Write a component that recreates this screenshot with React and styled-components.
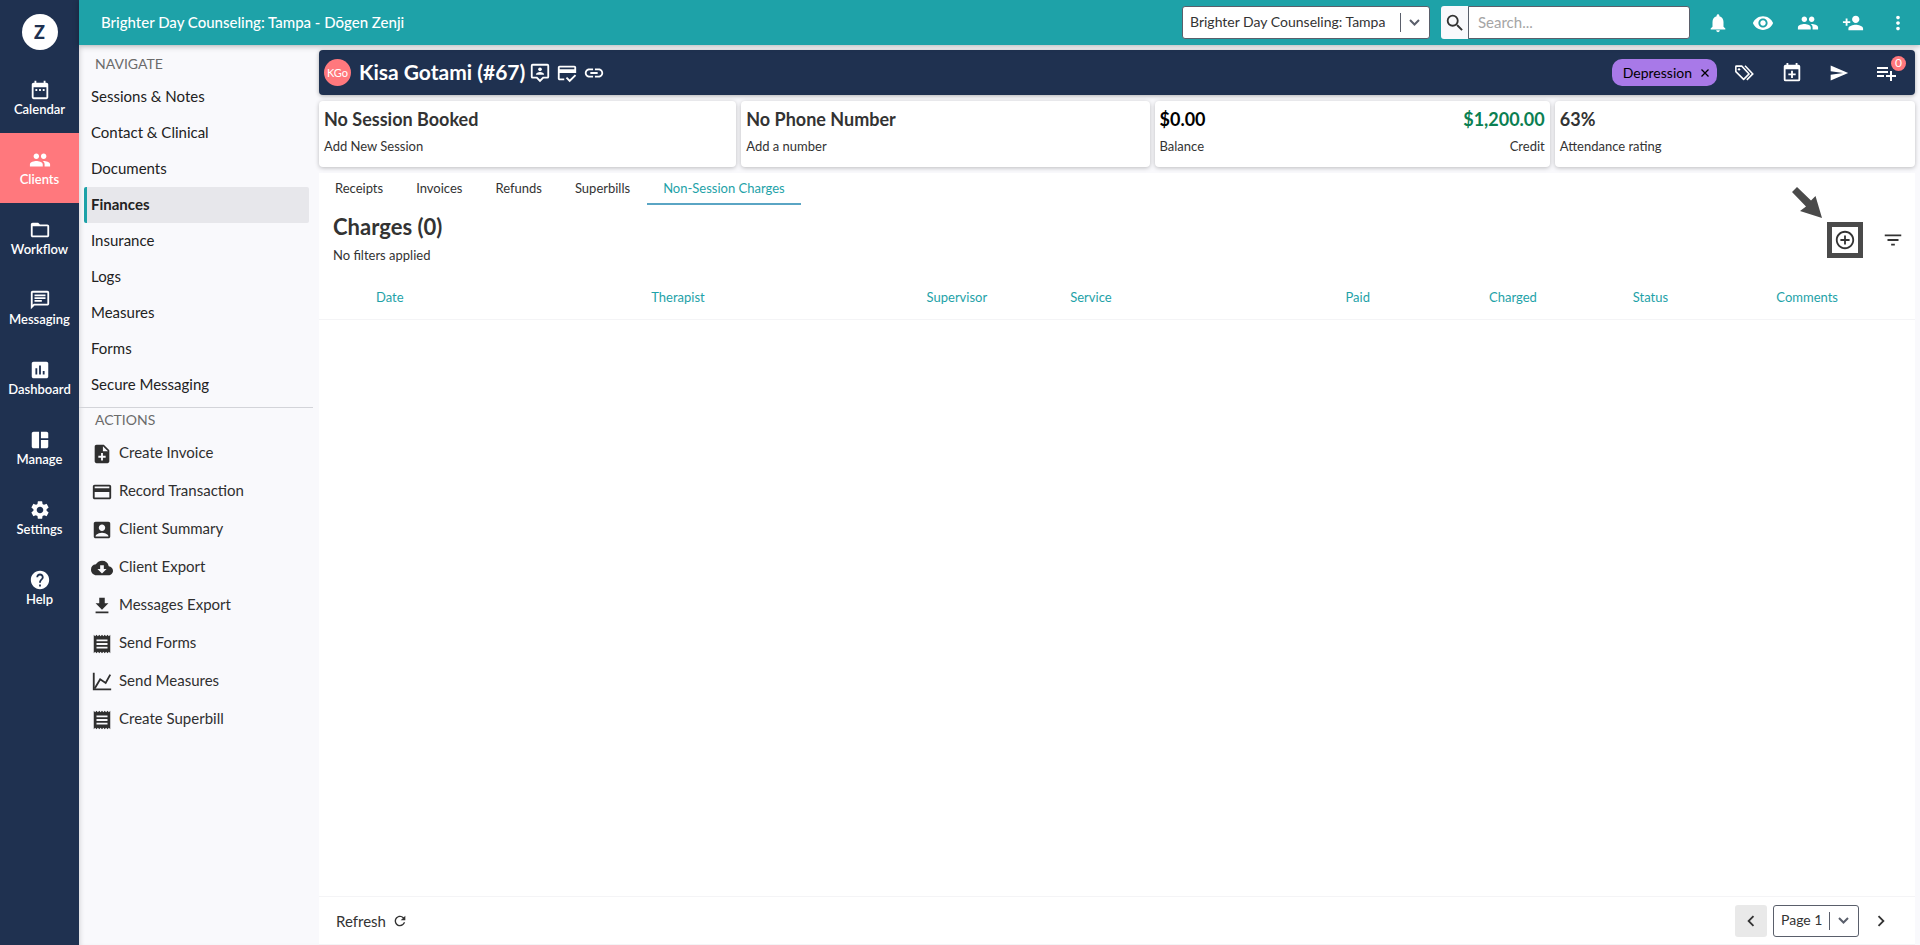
import React from 'react'
import styled, { createGlobalStyle } from 'styled-components'
import {
  MdAccountBox,
  MdAddCircleOutline,
  MdAssessment,
  MdChevronLeft,
  MdChevronRight,
  MdCloudDownload,
  MdCreditCard,
  MdCreditScore,
  MdDateRange,
  MdDownload,
  MdFilterList,
  MdFolderOpen,
  MdHelp,
  MdLink,
  MdMoreVert,
  MdNoteAdd,
  MdNotifications,
  MdOutlineChat,
  MdPeople,
  MdPersonAdd,
  MdPlaylistAdd,
  MdReceipt,
  MdRefresh,
  MdSearch,
  MdSend,
  MdSettings,
  MdSpaceDashboard,
  MdVisibility,
} from 'react-icons/md'

const ChartIcon = ({ size }) => (
  <svg width={size} height={size} viewBox='0 0 24 24' fill='none' stroke='currentColor' strokeWidth='2'>
    <path d='M3 2v18h19' />
    <path d='M4 19L10 9l6 4 5-9' />
  </svg>
)

const TagsIcon = ({ size }) => (
  <svg width={size} height={size} viewBox='0 0 24 24' fill='none' stroke='currentColor' strokeWidth='1.7'>
    <path d='M2 5v5.500l8.500 8.500 6-6L8.500 4.500H2.500A.5.5 0 0 0 2 5z' strokeLinejoin='round' />
    <path d='M12 4l8.500 9-6.500 6.500' />
    <circle cx='5.500' cy='8' r='1.300' fill='currentColor' stroke='none' />
  </svg>
)

const CalendarPlusIcon = ({ size }) => (
  <svg width={size} height={size} viewBox='0 0 24 24' fill='currentColor'>
    <path d='M19 19V8H5v11h14M16 1h2v2h1a2 2 0 0 1 2 2v14a2 2 0 0 1-2 2H5a2 2 0 0 1-2-2V5a2 2 0 0 1 2-2h1V1h2v2h8V1m-5 8.500h2v3h3v2h-3v3h-2v-3H8v-2h3v-3z' />
  </svg>
)

const ContactIcon = ({ size }) => (
  <svg width={size} height={size} viewBox='0 0 24 24' fill='currentColor'>
    <path d='M20 2H4a2 2 0 0 0-2 2v12a2 2 0 0 0 2 2h4l4 4 4-4h4a2 2 0 0 0 2-2V4a2 2 0 0 0-2-2zm0 14h-5l-3 3-3-3H4V4h16v12z' />
    <circle cx='12' cy='8' r='2' />
    <path d='M7.500 14c0-2 2.500-3 4.500-3s4.500 1 4.500 3z' />
  </svg>
)

const Caret = () => (
  <svg width='11' height='7' viewBox='0 0 11 7' fill='none' stroke='currentColor' strokeWidth='2'>
    <path d='M1 1l4.500 4.500L10 1' />
  </svg>
)

const menu = [
  { label: 'Calendar', Icon: MdDateRange },
  { label: 'Clients', Icon: MdPeople, active: true },
  { label: 'Workflow', Icon: MdFolderOpen },
  { label: 'Messaging', Icon: MdOutlineChat },
  { label: 'Dashboard', Icon: MdAssessment },
  { label: 'Manage', Icon: MdSpaceDashboard },
  { label: 'Settings', Icon: MdSettings },
  { label: 'Help', Icon: MdHelp },
]

const pages = [
  'Sessions & Notes',
  'Contact & Clinical',
  'Documents',
  'Finances',
  'Insurance',
  'Logs',
  'Measures',
  'Forms',
  'Secure Messaging',
]

const actions = [
  { label: 'Create Invoice', Icon: MdNoteAdd },
  { label: 'Record Transaction', Icon: MdCreditCard },
  { label: 'Client Summary', Icon: MdAccountBox },
  { label: 'Client Export', Icon: MdCloudDownload },
  { label: 'Messages Export', Icon: MdDownload },
  { label: 'Send Forms', Icon: MdReceipt },
  { label: 'Send Measures', Icon: ChartIcon },
  { label: 'Create Superbill', Icon: MdReceipt },
]

const tabs = ['Receipts', 'Invoices', 'Refunds', 'Superbills', 'Non-Session Charges']

const columns = ['Date', 'Therapist', 'Supervisor', 'Service', 'Paid', 'Charged', 'Status', 'Comments']

const topActions = [
  { label: 'Notifications', Icon: MdNotifications },
  { label: 'Recently viewed', Icon: MdVisibility },
  { label: 'Clients', Icon: MdPeople },
  { label: 'Add client', Icon: MdPersonAdd },
  { label: 'More', Icon: MdMoreVert },
]

export default function App() {
  return (
    <Page>
      <GlobalStyle />
      <Menu aria-label='Main'>
        <LogoLink href='#' aria-label='Home'>
          <Logo>Z</Logo>
        </LogoLink>
        {menu.map(({ label, Icon, active }) => (
          <MenuLink key={label} href='#' $active={active}>
            <Icon size={22} />
            {label}
          </MenuLink>
        ))}
      </Menu>
      <Content>
        <TopBar>
          <Practice>Brighter Day Counseling: Tampa - Dōgen Zenji</Practice>
          <SelectBox $wide>
            <Select aria-label='Location'>
              <option>Brighter Day Counseling: Tampa</option>
            </Select>
            <SelectArrow>
              <Caret />
            </SelectArrow>
          </SelectBox>
          <Search>
            <SearchButton aria-label='Search'>
              <MdSearch size={22} />
            </SearchButton>
            <SearchInput type='text' placeholder='Search...' aria-label='Search clients' />
          </Search>
          <TopActions>
            {topActions.map(({ label, Icon }) => (
              <IconButton key={label} aria-label={label} $width={45}>
                <Icon size={22} />
              </IconButton>
            ))}
          </TopActions>
        </TopBar>
        <Body>
          <SideNav>
            <NavTitle>NAVIGATE</NavTitle>
            <NavList>
              {pages.map((page) => (
                <li key={page}>
                  <NavLink href='#' $active={page === 'Finances'}>
                    {page}
                  </NavLink>
                </li>
              ))}
            </NavList>
            <Divider />
            <NavTitle $tight>ACTIONS</NavTitle>
            <NavList>
              {actions.map(({ label, Icon }) => (
                <li key={label}>
                  <ActionButton>
                    <Icon size={22} />
                    <span>{label}</span>
                  </ActionButton>
                </li>
              ))}
            </NavList>
          </SideNav>
          <Main>
            <ClientBar>
              <Avatar>KGo</Avatar>
              <ClientName>Kisa Gotami (#67)</ClientName>
              <TitleIcons>
                <ContactIcon size={22} />
                <MdCreditScore size={22} />
                <MdLink size={22} />
              </TitleIcons>
              <Chip>
                Depression
                <ChipClose aria-label='Remove Depression'>
                  <svg width='8' height='8' viewBox='0 0 8 8' stroke='currentColor' strokeWidth='1.300'>
                    <path d='M0.500 0.500l7 7M7.500 0.500l-7 7' />
                  </svg>
                </ChipClose>
              </Chip>
              <IconButton aria-label='Tags' $width={47}>
                <TagsIcon size={22} />
              </IconButton>
              <IconButton aria-label='Add session' $width={47}>
                <CalendarPlusIcon size={22} />
              </IconButton>
              <IconButton aria-label='Send message' $width={47}>
                <MdSend size={20} />
              </IconButton>
              <IconButton aria-label='Tasks' $width={47}>
                <MdPlaylistAdd size={24} />
                <Badge>0</Badge>
              </IconButton>
            </ClientBar>
            <Cards>
              <Card>
                <CardValue>No Session Booked</CardValue>
                <CardLink href='#'>Add New Session</CardLink>
              </Card>
              <Card>
                <CardValue>No Phone Number</CardValue>
                <CardLink href='#'>Add a number</CardLink>
              </Card>
              <Card $split>
                <div>
                  <CardValue $color='#000'>$0.00</CardValue>
                  <CardLabel>Balance</CardLabel>
                </div>
                <CardRight>
                  <CardValue $color='#0b7f52'>$1,200.00</CardValue>
                  <CardLabel>Credit</CardLabel>
                </CardRight>
              </Card>
              <Card>
                <CardValue>63%</CardValue>
                <CardLabel>Attendance rating</CardLabel>
              </Card>
            </Cards>
            <Panel>
              <Tabs role='tablist'>
                {tabs.map((tab) => (
                  <Tab key={tab} role='tab' aria-selected={tab === 'Non-Session Charges'}>
                    {tab}
                  </Tab>
                ))}
              </Tabs>
              <PanelHeader>
                <div>
                  <PanelTitle>Charges (0)</PanelTitle>
                  <Filters>No filters applied</Filters>
                </div>
                <PanelActions>
                  <Pointer width='31' height='31' viewBox='0 0 31 31' fill='#4a4a4a'>
                    <path d='M5 0L19 13.500 23.500 9 30 31 8 24l6-4.500L0 5z' />
                  </Pointer>
                  <AddButton aria-label='Add charge'>
                    <MdAddCircleOutline size={22} />
                  </AddButton>
                  <FilterButton aria-label='Filter charges'>
                    <MdFilterList size={22} />
                  </FilterButton>
                </PanelActions>
              </PanelHeader>
              <Table>
                <thead>
                  <HeadRow>
                    <th aria-label='Select' />
                    {columns.map((column) => (
                      <Heading key={column}>{column}</Heading>
                    ))}
                  </HeadRow>
                </thead>
                <tbody />
              </Table>
              <Footer>
                <Refresh>
                  Refresh
                  <MdRefresh size={16} />
                </Refresh>
                <Pager>
                  <PageButton aria-label='Previous page' $filled>
                    <MdChevronLeft size={22} />
                  </PageButton>
                  <SelectBox>
                    <Select aria-label='Page'>
                      <option>Page 1</option>
                    </Select>
                    <SelectArrow>
                      <Caret />
                    </SelectArrow>
                  </SelectBox>
                  <PageButton aria-label='Next page'>
                    <MdChevronRight size={22} />
                  </PageButton>
                </Pager>
              </Footer>
            </Panel>
          </Main>
        </Body>
      </Content>
    </Page>
  )
}

const GlobalStyle = createGlobalStyle`
  * {
    box-sizing: border-box;
  }
  body {
    margin: 0;
    background: #f9f9fc;
    color: #333;
    font-family: Lato, "Open Sans", sans-serif;
    font-size: 13px;
  }
  h1, h2, h3, p, ul {
    margin: 0;
    padding: 0;
  }
  ul {
    list-style: none;
  }
  a {
    color: inherit;
    text-decoration: none;
  }
  button, input, select {
    font: inherit;
    color: inherit;
  }
  button {
    padding: 0;
    border: 0;
    background: none;
    cursor: pointer;
  }
  svg {
    flex-shrink: 0;
  }
`

const Page = styled.div`
  display: flex;
  min-height: 100vh;
`

const Menu = styled.nav`
  flex: 0 0 79px;
  background: #1f3150;
  color: #fff;
`

const LogoLink = styled.a`
  display: flex;
  justify-content: center;
  height: 63px;
  padding-top: 14px;
`

const Logo = styled.span`
  display: flex;
  align-items: center;
  justify-content: center;
  width: 36px;
  height: 36px;
  border-radius: 50%;
  background: #fff;
  color: #1f3150;
  font-size: 18px;
  font-weight: 900;
`

const MenuLink = styled.a`
  display: flex;
  flex-direction: column;
  align-items: center;
  justify-content: center;
  height: 70px;
  font-size: 13px;
  font-weight: 600;
  line-height: 16px;
  background: ${(props) => (props.$active ? '#ff787d' : 'transparent')};
`

const Content = styled.div`
  flex: 1;
  min-width: 0;
  display: flex;
  flex-direction: column;
`

const TopBar = styled.header`
  display: flex;
  align-items: center;
  height: 45px;
  padding-left: 22px;
  background: #1ea2a8;
  color: #fff;
  box-shadow: 0 1px 6px rgba(0, 0, 0, 0.3);
  z-index: 1;
`

const Practice = styled.div`
  flex: 1;
  padding-bottom: 2px;
  font-size: 15px;
  font-weight: 500;
`

const SelectBox = styled.div`
  position: relative;
  width: ${(props) => (props.$wide ? '248px' : '86px')};
  height: ${(props) => (props.$wide ? '33px' : '32px')};
`

const Select = styled.select`
  width: 100%;
  height: 100%;
  padding: 0 36px 2px 7px;
  border: 1px solid #5a5f6b;
  border-radius: 3px;
  appearance: none;
  background: #fff;
  color: #333;
  font-size: 14px;
`

const SelectArrow = styled.span`
  position: absolute;
  top: 7px;
  right: 0;
  bottom: 7px;
  display: flex;
  align-items: center;
  justify-content: center;
  width: 30px;
  padding-right: 2px;
  border-left: 1px solid #5a5f6b;
  color: #5a5f6b;
  pointer-events: none;
`

const Search = styled.div`
  display: flex;
  width: 249px;
  height: 33px;
  margin-left: 11px;
`

const SearchButton = styled.button`
  display: flex;
  align-items: center;
  justify-content: center;
  width: 27px;
  border-radius: 3px 0 0 3px;
  background: #f9f9fc;
  color: #333;
`

const SearchInput = styled.input`
  flex: 1;
  min-width: 0;
  padding: 0 9px 1px;
  border: 1px solid #5a5f6b;
  border-radius: 0 3px 3px 0;
  background: #fff;
  color: #333;
  font-size: 15px;
  &::placeholder {
    color: #a5a5a5;
  }
`

const TopActions = styled.div`
  display: flex;
  padding-left: 5px;
`

const IconButton = styled.button`
  position: relative;
  display: flex;
  align-items: center;
  justify-content: center;
  width: ${(props) => props.$width}px;
  height: 32px;
  color: #fff;
`

const Body = styled.div`
  flex: 1;
  display: flex;
`

const SideNav = styled.aside`
  flex: 0 0 240px;
  padding-top: 10px;
  box-shadow: inset 4px 0 5px -3px rgba(0, 0, 0, 0.15);
`

const NavTitle = styled.h3`
  padding-left: 16px;
  height: ${(props) => (props.$tight ? '26px' : '24px')};
  padding-top: ${(props) => (props.$tight ? '3px' : '0')};
  color: #6b6b6b;
  font-size: 14px;
  font-weight: 400;
  line-height: 18px;
`

const NavList = styled.ul`
  margin: 0;
`

const NavLink = styled.a`
  display: flex;
  align-items: center;
  height: 36px;
  margin: 0 10px 0 5px;
  padding: 0 0 2px 4px;
  border-left: 3px solid ${(props) => (props.$active ? '#1ea2a8' : 'transparent')};
  border-radius: 2px;
  background: ${(props) => (props.$active ? '#e7e7eb' : 'transparent')};
  color: #222;
  font-size: 15px;
  font-weight: ${(props) => (props.$active ? '700' : '400')};
`

const Divider = styled.hr`
  height: 1px;
  margin: 4px 6px 0 0;
  border: 0;
  background: #d3d4d9;
`

const ActionButton = styled.button`
  display: flex;
  align-items: center;
  gap: 6px;
  width: 100%;
  height: 38px;
  padding: 2px 0 0 12px;
  color: #2f2f2f;
  font-size: 15px;
  span {
    padding-bottom: 4px;
  }
`

const Main = styled.main`
  flex: 1;
  min-width: 0;
  display: flex;
  flex-direction: column;
  padding: 5px 5px 0 0;
`

const ClientBar = styled.section`
  display: flex;
  align-items: center;
  height: 45px;
  padding: 0 6px 0 5px;
  border-radius: 4px;
  background: #1f3150;
  color: #fff;
  box-shadow: 0 1px 4px rgba(0, 0, 0, 0.3);
`

const Avatar = styled.span`
  display: flex;
  align-items: center;
  justify-content: center;
  width: 27px;
  height: 27px;
  border-radius: 50%;
  background: #ff787d;
  font-size: 11px;
`

const ClientName = styled.h1`
  margin-left: 8px;
  padding-bottom: 2px;
  font-size: 21px;
  font-weight: 700;
`

const TitleIcons = styled.div`
  display: flex;
  align-items: center;
  flex: 1;
  gap: 5px;
  padding-left: 4px;
`

const Chip = styled.span`
  display: flex;
  align-items: center;
  gap: 9px;
  height: 27px;
  margin-right: 4px;
  padding: 0 8px 0 11px;
  border-radius: 10px;
  background: #a879e8;
  color: #000;
  font-size: 14px;
`

const ChipClose = styled.button`
  display: flex;
`

const Badge = styled.span`
  position: absolute;
  top: -1px;
  right: 3px;
  width: 15px;
  height: 15px;
  border-radius: 50%;
  background: #ff787d;
  font-size: 12px;
  line-height: 14px;
  text-align: center;
`

const Cards = styled.section`
  display: grid;
  grid-template-columns: 417fr 408fr 395fr 360fr;
  gap: 5px;
  margin: 6px 0;
`

const Card = styled.div`
  display: flex;
  flex-direction: ${(props) => (props.$split ? 'row' : 'column')};
  justify-content: ${(props) => (props.$split ? 'space-between' : 'flex-start')};
  height: 66px;
  padding: 5px;
  border-radius: 4px;
  background: #fff;
  box-shadow: 0 1px 4px rgba(0, 0, 0, 0.25);
`

const CardRight = styled.div`
  text-align: right;
`

const CardValue = styled.h3`
  color: ${(props) => props.$color || '#333'};
  font-size: 18px;
  font-weight: 700;
  line-height: 26px;
`

const CardLabel = styled.p`
  padding-top: 4px;
  font-size: 13px;
  line-height: 20px;
`

const CardLink = styled.a`
  padding-top: 4px;
  font-size: 13px;
  line-height: 20px;
`

const Panel = styled.section`
  flex: 1;
  display: flex;
  flex-direction: column;
  background: #fff;
`

const Tabs = styled.div`
  display: flex;
  gap: 1px;
`

const Tab = styled.button`
  height: 32px;
  padding: 0 16px;
  border-bottom: 2px solid transparent;
  font-size: 13px;
  &[aria-selected='true'] {
    border-color: #5aa5c4;
    color: #1ea2a8;
  }
`

const PanelHeader = styled.div`
  display: flex;
  justify-content: space-between;
  padding: 8px 11px 0 14px;
`

const PanelTitle = styled.h2`
  font-size: 22px;
  font-weight: 700;
  line-height: 28px;
`

const Filters = styled.p`
  padding-top: 4px;
  font-size: 13px;
  line-height: 20px;
`

const PanelActions = styled.div`
  position: relative;
  display: flex;
  gap: 19px;
  padding-top: 9px;
`

/* arrow laid over the panel, aimed at the add button */
const Pointer = styled.svg`
  position: absolute;
  top: -26px;
  left: -35px;
`

const AddButton = styled.button`
  display: flex;
  align-items: center;
  justify-content: center;
  width: 36px;
  height: 36px;
  border: 5px solid #4a4a4a;
`

const FilterButton = styled.button`
  display: flex;
  align-items: center;
  height: 36px;
`

const Table = styled.table`
  display: block;
  width: 100%;
  margin-top: 10px;
  thead {
    display: block;
  }
`

const HeadRow = styled.tr`
  display: grid;
  grid-template-columns: 52px 23fr 23fr 12fr 23fr 12fr 12fr 12fr 12fr;
  align-items: center;
  height: 45px;
  border-bottom: 1px solid #f4f4f6;
`

const Heading = styled.th`
  padding: 0 5px;
  color: #1ea2a8;
  font-size: 13px;
  font-weight: 400;
  text-align: left;
`

const Footer = styled.footer`
  display: flex;
  align-items: center;
  justify-content: space-between;
  height: 49px;
  margin-top: auto;
  padding: 0 18px 0 17px;
  border-top: 1px solid #f4f4f6;
  border-bottom: 1px solid #f4f4f6;
`

const Refresh = styled.button`
  display: flex;
  align-items: center;
  gap: 6px;
  font-size: 15px;
`

const Pager = styled.div`
  display: flex;
  gap: 6px;
`

const PageButton = styled.button`
  display: flex;
  align-items: center;
  justify-content: center;
  width: 32px;
  height: 32px;
  border-radius: 3px;
  background: ${(props) => (props.$filled ? '#e9e9e9' : 'transparent')};
`
